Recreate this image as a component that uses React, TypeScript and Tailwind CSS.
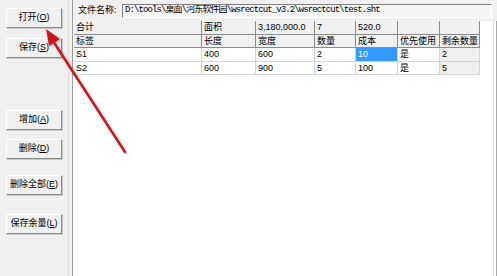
import React from "react";

type Cell = { text: string; kind?: "head" | "sel" | "gray" };

const totalRow: Cell[] = [
  { text: "合计", kind: "head" },
  { text: "面积", kind: "head" },
  { text: "3,180,000.0", kind: "head" },
  { text: "7", kind: "head" },
  { text: "520.0", kind: "head" },
  { text: "", kind: "head" },
  { text: "", kind: "head" },
];

const headRow: Cell[] = ["标签", "长度", "宽度", "数量", "成本", "优先使用", "剩余数量"].map(
  (t) => ({ text: t, kind: "head" as const })
);

const dataRows: Cell[][] = [
  [
    { text: "S1" },
    { text: "400" },
    { text: "600" },
    { text: "2" },
    { text: "10", kind: "sel" },
    { text: "是" },
    { text: "2", kind: "gray" },
  ],
  [
    { text: "S2" },
    { text: "600" },
    { text: "900" },
    { text: "5" },
    { text: "100" },
    { text: "是" },
    { text: "5", kind: "gray" },
  ],
];

const WinButton = ({ label, hot, className }: { label: string; hot: string; className?: string }) => (
  <button
    className={`w-[56px] h-[20px] bg-[#f0f0f0] border border-t-white border-l-white border-r-[#8a8a8a] border-b-[#8a8a8a] shadow-[1px_1px_0_#c8c8c8] text-[9px] text-black flex items-center justify-center ${className ?? ""}`}
  >
    {label}(<u>{hot}</u>)
  </button>
);

const GridRow = ({ cells, tall }: { cells: Cell[]; tall: boolean }) => (
  <div className={`grid grid-cols-[128px_54px_59px_41px_42px_42px_40px] ${tall ? "h-[14px]" : "h-[13px]"}`}>
    {cells.map((c, i) => {
      const style =
        c.kind === "head"
          ? "bg-[#f0f0f0] border-r border-b border-[#8c8c8c]"
          : c.kind === "sel"
          ? "bg-[#3399ff] text-white border-r border-b border-[#d4d4d4]"
          : c.kind === "gray"
          ? "bg-[#efefef] border-r border-b border-[#d4d4d4]"
          : "bg-white border-r border-b border-[#d4d4d4]";
      return (
        <div key={i} className={`${style} pl-[2px] flex items-center leading-none whitespace-nowrap overflow-hidden`}>
          {c.text}
        </div>
      );
    })}
  </div>
);

export default function App() {
  return (
    <div className="relative w-[497px] h-[276px] flex bg-white overflow-hidden font-['Liberation_Sans','Noto_Sans_CJK_SC',sans-serif] text-[9px] text-black">
      {/* left tool panel */}
      <div className="w-[68px] h-full bg-[#f0f0f0] flex flex-col items-center pt-[8px]">
        <WinButton label="打开" hot="O" />
        <WinButton label="保存" hot="S" className="mt-[10px]" />
        <WinButton label="增加" hot="A" className="mt-[52px]" />
        <WinButton label="删除" hot="D" className="mt-[9px]" />
        <WinButton label="删除全部" hot="E" className="mt-[16px]" />
        <WinButton label="保存余量" hot="L" className="mt-[19px]" />
      </div>
      <div className="w-[5px] h-full bg-[#f0f0f0] border-l border-l-[#dcdcdc] border-r border-r-[#9a9a9a]" />

      {/* main area */}
      <div className="flex-1 flex flex-col">
        <div className="h-[21px] bg-[#f0f0f0] flex items-center pl-[5px] pr-[5px]">
          <span className="w-[44px] shrink-0">文件名称:</span>
          <div className="flex-1 h-[14px] bg-[#f4f4f4] border border-t-[#808080] border-l-[#808080] border-r-white border-b-white flex items-center pl-[2px] font-['Liberation_Mono','Noto_Sans_CJK_SC',monospace] text-[9px] tracking-[-0.9px] whitespace-nowrap overflow-hidden">
            D:\tools\桌面\河东软件园\wsrectcut_v3.2\wsrectcut\test.sht
          </div>
        </div>
        <div className="flex-1 flex pl-[1px]">
          <div className="flex flex-col">
            <GridRow cells={totalRow} tall />
            <GridRow cells={headRow} tall={false} />
            {dataRows.map((r, i) => (
              <GridRow key={i} cells={r} tall={i === 0} />
            ))}
          </div>
          <div className="flex-1" />
          <div className="w-[4px] h-full border-l border-l-[#dadada] border-r border-r-[#a8a8a8] bg-white" />
        </div>
      </div>

      {/* red annotation arrow */}
      <svg className="absolute left-0 top-0 pointer-events-none" width="497" height="276" viewBox="0 0 497 276">
        <defs>
          <filter id="sh" x="-20%" y="-20%" width="140%" height="140%">
            <feDropShadow dx="1.5" dy="1.5" stdDeviation="1.2" floodColor="#000" floodOpacity="0.25" />
          </filter>
        </defs>
        <g filter="url(#sh)">
          <line x1="125" y1="152" x2="53" y2="41" stroke="#c8161d" strokeWidth="2.4" strokeLinecap="round" />
          <polygon points="46,29 60,39 49,46" fill="#c8161d" />
        </g>
      </svg>
    </div>
  );
}
